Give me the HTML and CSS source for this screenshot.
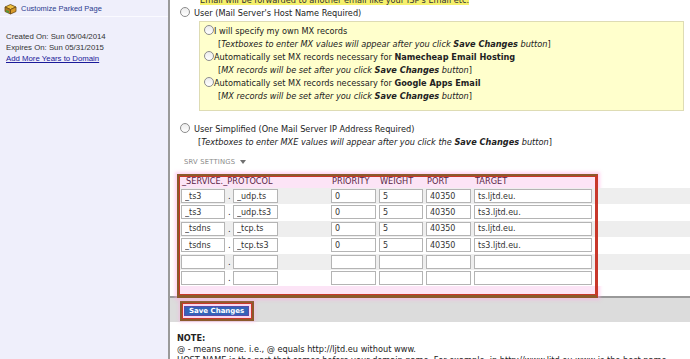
FILE: index.html
```html
<!DOCTYPE html>
<html lang="en">
  <head>
    <meta charset="UTF-8" />
    <meta name="viewport" content="width=device-width, initial-scale=1.0" />
    <title>Email &amp; SRV Settings</title>

    <link rel="stylesheet" href="styles.css">
  </head>

  <body>
    <div class="page">
      <div class="side">
        <div class="side-head">
          <svg class="box-icon" width="13" height="13" viewBox="0 0 13 13">
            <path d="M1 5 L6.5 2.5 L12 5 L6.5 7.5 Z" fill="#f0c040" stroke="#6b4a12" stroke-width=".8" />
            <path d="M1 5 V9.5 L6.5 12 V7.5 Z" fill="#b07a20" stroke="#6b4a12" stroke-width=".8" />
            <path d="M12 5 V9.5 L6.5 12 V7.5 Z" fill="#d89a2a" stroke="#6b4a12" stroke-width=".8" />
            <path d="M2 8 L5 9.3 V11 L2 9.7 Z" fill="#4f9a3a" />
          </svg>
          <a href="#" class="side-link">Customize Parked Page</a>
        </div>
        <div class="side-info">
          <div>Created On: Sun 05/04/2014</div>
          <div>Expires On: Sun 05/31/2015</div>
          <a href="#" class="renew">Add More Years to Domain</a>
        </div>
      </div>

      <div class="main">
        <div class="fwd"><span class="hilite">Email will be forwarded to another email like your ISP's Email etc.</span></div>

        <label class="opt"><input type="radio" name="mail" />User (Mail Server's Host Name Required)</label>

        <div class="mx-box">
          <label class="sub-opt"><input type="radio" name="mx" />I will specify my own MX records</label>
          <div class="hint">[<i>Textboxes to enter MX values will appear after you click <b>Save Changes</b> button</i>]</div>
          <label class="sub-opt"><input type="radio" name="mx" />Automatically set MX records necessary for <b>Namecheap Email Hosting</b></label>
          <div class="hint">[<i>MX records will be set after you click <b>Save Changes</b> button</i>]</div>
          <label class="sub-opt"><input type="radio" name="mx" />Automatically set MX records necessary for <b>Google Apps Email</b></label>
          <div class="hint">[<i>MX records will be set after you click <b>Save Changes</b> button</i>]</div>
        </div>

        <label class="opt simple"><input type="radio" name="mail" />User Simplified (One Mail Server IP Address Required)</label>
        <div class="opt-hint">[<i>Textboxes to enter MXE values will appear after you click the <b>Save Changes</b> button</i>]</div>

        <div class="srv-title">SRV Settings <span class="caret"></span></div>

        <div class="srv">
          <div class="srv-row srv-head">
            <span class="wide">_SERVICE._PROTOCOL</span>
            <span>PRIORITY</span>
            <span>WEIGHT</span>
            <span>PORT</span>
            <span>TARGET</span>
          </div>
          <div class="srv-row">
            <input value="_ts3" /><span class="dot">.</span><input value="_udp.ts" /><span></span>
            <input value="0" /><input value="5" /><input value="40350" /><input value="ts.ljtd.eu." />
          </div>
          <div class="srv-row">
            <input value="_ts3" /><span class="dot">.</span><input value="_udp.ts3" /><span></span>
            <input value="0" /><input value="5" /><input value="40350" /><input value="ts3.ljtd.eu." />
          </div>
          <div class="srv-row">
            <input value="_tsdns" /><span class="dot">.</span><input value="_tcp.ts" /><span></span>
            <input value="0" /><input value="5" /><input value="40350" /><input value="ts.ljtd.eu." />
          </div>
          <div class="srv-row">
            <input value="_tsdns" /><span class="dot">.</span><input value="_tcp.ts3" /><span></span>
            <input value="0" /><input value="5" /><input value="40350" /><input value="ts3.ljtd.eu." />
          </div>
          <div class="srv-row">
            <input /><span class="dot">.</span><input /><span></span>
            <input /><input /><input /><input />
          </div>
          <div class="srv-row">
            <input /><span class="dot">.</span><input /><span></span>
            <input /><input /><input /><input />
          </div>
        </div>

        <div class="save-bar">
          <span class="mark"><button class="save">Save Changes</button></span>
        </div>

        <div class="note">
          <b>NOTE:</b>
          <div>@ - means none. i.e., @ equals http://ljtd.eu without www.</div>
          <div>HOST NAME is the part that comes before your domain name. For example, in http://www.ljtd.eu www is the host name.</div>
        </div>
      </div>
    </div>
  </body>
</html>
```

FILE: styles.css
```css
      body {
        margin: 0;
        padding: 0;
        background-color: #ffffff;
        font-family: "DejaVu Sans", Verdana, sans-serif;
        font-size: 8.2px;
        color: #222;
      }

      .page {
        display: flex;
        width: 690px;
        height: 359px;
        overflow: hidden;
      }

      /* left column */
      .side {
        width: 168px;
        flex-shrink: 0;
        background-color: #efeffb;
        border-right: 2px solid #9a9a9a;
        font-family: "Liberation Sans", Arial, sans-serif;
      }

      .side-head {
        height: 16px;
        display: flex;
        align-items: center;
        gap: 4px;
        padding-left: 4px;
        border-bottom: 1px solid #fafaff;
      }

      .side-link {
        color: #2b3b8f;
        font-size: 7.5px;
        text-decoration: none;
      }

      .side-info {
        padding: 14px 0 0 6px;
        font-size: 7.8px;
        line-height: 11px;
        color: #333;
      }

      .renew {
        color: #1a1a9a;
        text-decoration: underline;
      }

      /* right column */
      .main {
        flex: 1;
        line-height: 13px;
        overflow: hidden;
      }

      .fwd {
        margin-top: -6px;
        padding-left: 30px;
      }

      .hilite {
        background-color: #f5f06b;
        color: #333;
      }

      .opt {
        display: block;
        margin-left: 10px;
      }

      .opt.simple {
        margin-top: 12px;
      }

      .opt-hint {
        margin-left: 28px;
      }

      input[type="radio"] {
        appearance: none;
        width: 10px;
        height: 10px;
        margin: 0 4px 0 0;
        border: 1px solid #8c8c8c;
        border-radius: 50%;
        background: linear-gradient(#ececec, #ffffff);
        vertical-align: -1px;
      }

      .mx-box {
        margin: 1px 6px 0 29px;
        padding: 3px 0 7px 4px;
        background-color: #ffffcc;
        border: 1px solid #dedcb4;
      }

      .sub-opt {
        display: block;
      }

      .sub-opt input[type="radio"] {
        margin-right: 0;
      }

      .hint {
        margin-left: 14px;
      }

      .srv-title {
        margin: 7px 0 0 14px;
        line-height: 12px;
        font-size: 6.8px;
        text-transform: uppercase;
        letter-spacing: 0.2px;
        color: #8a8a8a;
      }

      .caret {
        display: inline-block;
        width: 0;
        height: 0;
        margin-left: 2px;
        border-left: 3.5px solid transparent;
        border-right: 3.5px solid transparent;
        border-top: 4px solid #707070;
        vertical-align: 0;
      }

      /* srv table */
      .srv {
        position: relative;
        margin-top: 6px;
        padding: 1px 0 10px;
      }

      /* highlight frame drawn over the table */
      .srv::before,
      .srv::after {
        content: "";
        position: absolute;
        left: 7px;
        top: 0;
        width: 421px;
        height: 124px;
        box-sizing: border-box;
      }

      .srv::before {
        background-color: #fce4f6;
        box-shadow: 0 0 3px 2px rgba(255, 170, 230, 0.5);
        z-index: 0;
      }

      .srv::after {
        border: 2px solid #8b5a2b;
        border-right-color: #c8382b;
        border-bottom-width: 3px;
        box-shadow: inset 0 0 0 1px #c8382b;
        z-index: 2;
      }

      .srv-row {
        position: relative;
        z-index: 1;
        display: grid;
        grid-template-columns: 44px 2px 45px 47px 45px 44px 45px 118px;
        column-gap: 3px;
        height: 16.4px;
        margin-left: 9px;
        padding-left: 2px;
        background-color: #ffffff;
      }

      .srv-row:nth-child(even) {
        background-color: #eeeeee;
      }

      .srv-head {
        height: 13px;
        line-height: 13px;
        background-color: transparent;
        color: #5a2446;
      }

      .srv-head span {
        padding-left: 1px;
      }

      .srv-head .wide {
        grid-column: 1 / 5;
      }

      .srv-row input {
        width: 100%;
        height: 14px;
        margin: 1px 0 0;
        padding: 0 3px;
        box-sizing: border-box;
        border: 1px solid #b4b4b4;
        background-color: #ffffff;
        font-family: "DejaVu Sans", Verdana, sans-serif;
        font-size: 8px;
        color: #333;
      }

      .dot {
        line-height: 17px;
        text-align: center;
      }

      /* save bar */
      .save-bar {
        border-top: 2px solid #999;
        background-color: #dcdcdc;
        padding: 3px 0 1px 10px;
      }

      .mark {
        display: inline-block;
        height: 20px;
        box-sizing: border-box;
        padding: 3px 3px 3px 2px;
        background-color: #f8d8f0;
        border: 2px solid #8b5a2b;
        box-shadow: inset 0 0 0 1px #c8382b, 0 0 3px 1px rgba(255, 170, 230, 0.5);
        vertical-align: top;
      }

      .save {
        display: block;
        height: 10px;
        padding: 0 4px;
        border: 1px solid #5a4aa8;
        background-color: #3363b8;
        color: #ffffff;
        font-family: "DejaVu Sans", Verdana, sans-serif;
        font-weight: bold;
        font-size: 7px;
        line-height: 8px;
        cursor: pointer;
      }

      .note {
        margin: 11px 0 0 7px;
        line-height: 11px;
        color: #222;
      }
```
